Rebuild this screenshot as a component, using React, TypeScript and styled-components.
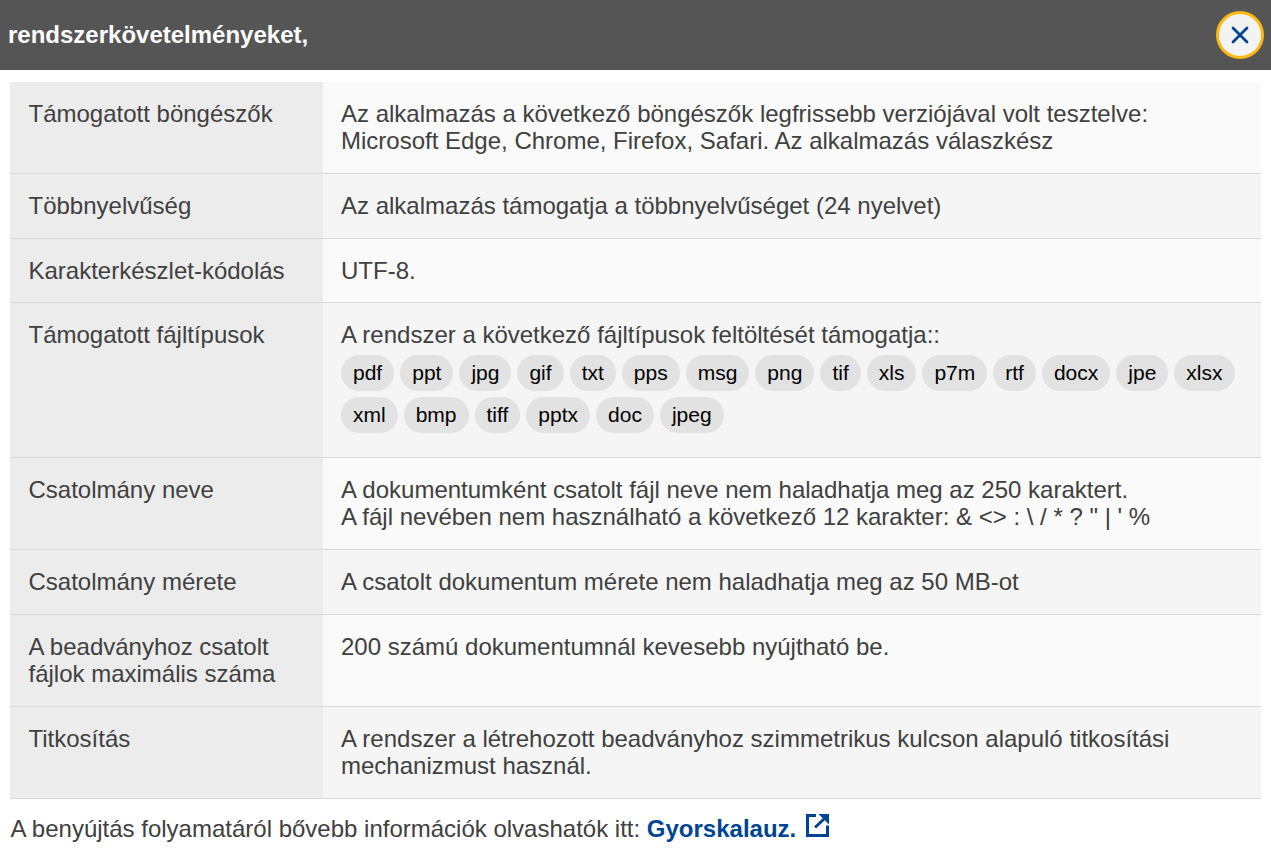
import React, { FC } from 'react';
import styled, { createGlobalStyle } from 'styled-components';

const GlobalStyle = createGlobalStyle`
    html, body {
        margin: 0;
        padding: 0;
        background: #fff;
    }
    body {
        font-family: "Liberation Sans", Arial, sans-serif;
        font-size: 24px;
        line-height: 27.5px;
        color: #404040;
    }
`;

const Header = styled.header`
    height: 70px;
    background: #555555;
    display: flex;
    align-items: center;
    justify-content: space-between;
    padding: 0 7px 0 8px;
`;

const Title = styled.h2`
    margin: 0;
    font-size: 24px;
    line-height: 27.5px;
    font-weight: 700;
    color: #fff;
`;

const CloseButton = styled.button`
    width: 48px;
    height: 48px;
    padding: 0;
    border-radius: 50%;
    border: 3px solid #fdb913;
    background: #f3f3f3;
    display: flex;
    align-items: center;
    justify-content: center;
`;

const Content = styled.main`
    padding: 12px 10px 0;
`;

const Table = styled.div`
    display: flex;
    flex-direction: column;
`;

const Row = styled.div`
    display: grid;
    grid-template-columns: 313px 1fr;
    border-bottom: 1px solid #d9d9d9;
`;

const Label = styled.div`
    background: #ececec;
    padding: 18px 18px 18px 18.5px;
`;

const Value = styled.div<{ $shaded: boolean; $tight?: boolean }>`
    background: ${props => (props.$shaded ? '#f5f5f5' : '#fafafa')};
    padding: 18px 18px ${props => (props.$tight ? '19px' : '18px')};
    line-height: ${props => (props.$tight ? '27px' : '27.5px')};
`;

const Chips = styled.div`
    display: flex;
    flex-wrap: wrap;
    gap: 6px;
    margin-top: 6.5px;
    margin-bottom: 6px;
`;

const Chip = styled.span`
    height: 36px;
    line-height: 36px;
    padding: 0 12px;
    border-radius: 18px;
    background: #e2e2e2;
    color: #000;
    font-size: 21px;
`;

const Footer = styled.p`
    margin: 0;
    padding: 15.6px 0 0 0.5px;
`;

const Link = styled.a`
    color: #004494;
    font-weight: 700;
    text-decoration: none;
`;

const ExternalIcon = styled.svg`
    width: 23px;
    height: 23px;
    margin-left: 10px;
    vertical-align: 0;
`;

const fileTypes = [
    'pdf', 'ppt', 'jpg', 'gif', 'txt', 'pps', 'msg', 'png', 'tif', 'xls', 'p7m', 'rtf',
    'docx', 'jpe', 'xlsx', 'xml', 'bmp', 'tiff', 'pptx', 'doc', 'jpeg'
];

const rows: { label: React.ReactNode; value: React.ReactNode; tight?: boolean }[] = [
    {
        label: 'Támogatott böngészők',
        tight: true,
        value: (
            <>
                Az alkalmazás a következő böngészők legfrissebb verziójával volt tesztelve:
                <br />
                Microsoft Edge, Chrome, Firefox, Safari. Az alkalmazás válaszkész
            </>
        )
    },
    {
        label: 'Többnyelvűség',
        value: 'Az alkalmazás támogatja a többnyelvűséget (24 nyelvet)'
    },
    { label: 'Karakterkészlet-kódolás', value: 'UTF-8.' },
    {
        label: 'Támogatott fájltípusok',
        value: (
            <>
                A rendszer a következő fájltípusok feltöltését támogatja::
                <Chips>
                    {fileTypes.map(type => (
                        <Chip key={type}>{type}</Chip>
                    ))}
                </Chips>
            </>
        )
    },
    {
        label: 'Csatolmány neve',
        tight: true,
        value: (
            <>
                A dokumentumként csatolt fájl neve nem haladhatja meg az 250 karaktert.
                <br />
                A fájl nevében nem használható a következő 12 karakter: &amp; &lt;&gt; : \ / * ? " | ' %
            </>
        )
    },
    {
        label: 'Csatolmány mérete',
        value: 'A csatolt dokumentum mérete nem haladhatja meg az 50 MB-ot'
    },
    {
        label: 'A beadványhoz csatolt fájlok maximális száma',
        value: '200 számú dokumentumnál kevesebb nyújtható be.'
    },
    {
        label: 'Titkosítás',
        value: 'A rendszer a létrehozott beadványhoz szimmetrikus kulcson alapuló titkosítási mechanizmust használ.'
    }
];

const App: FC = () => (
    <>
        <GlobalStyle />
        <Header>
            <Title>rendszerkövetelményeket,</Title>
            <CloseButton aria-label="Bezárás">
                <svg width="18" height="18" viewBox="0 0 18 18" fill="none">
                    <path d="M2 2L16 16M16 2L2 16" stroke="#004494" strokeWidth="2.8" strokeLinecap="round" />
                </svg>
            </CloseButton>
        </Header>
        <Content>
            <Table>
                {rows.map((row, index) => (
                    <Row key={index}>
                        <Label>{row.label}</Label>
                        <Value $shaded={index % 2 === 1} $tight={row.tight}>
                            {row.value}
                        </Value>
                    </Row>
                ))}
            </Table>
            <Footer>
                A benyújtás folyamatáról bővebb információk olvashatók itt: <Link href="#">Gyorskalauz.</Link>
                <ExternalIcon viewBox="0 0 23 23" fill="none">
                    <path d="M10 1.5H1.5V21.5H21.5V11.5" stroke="#004494" strokeWidth="3" />
                    <path d="M9 13.5L18 5" stroke="#004494" strokeWidth="3" />
                    <path d="M12.5 0H23V10.5Z" fill="#004494" />
                </ExternalIcon>
            </Footer>
        </Content>
    </>
);

export default App;
